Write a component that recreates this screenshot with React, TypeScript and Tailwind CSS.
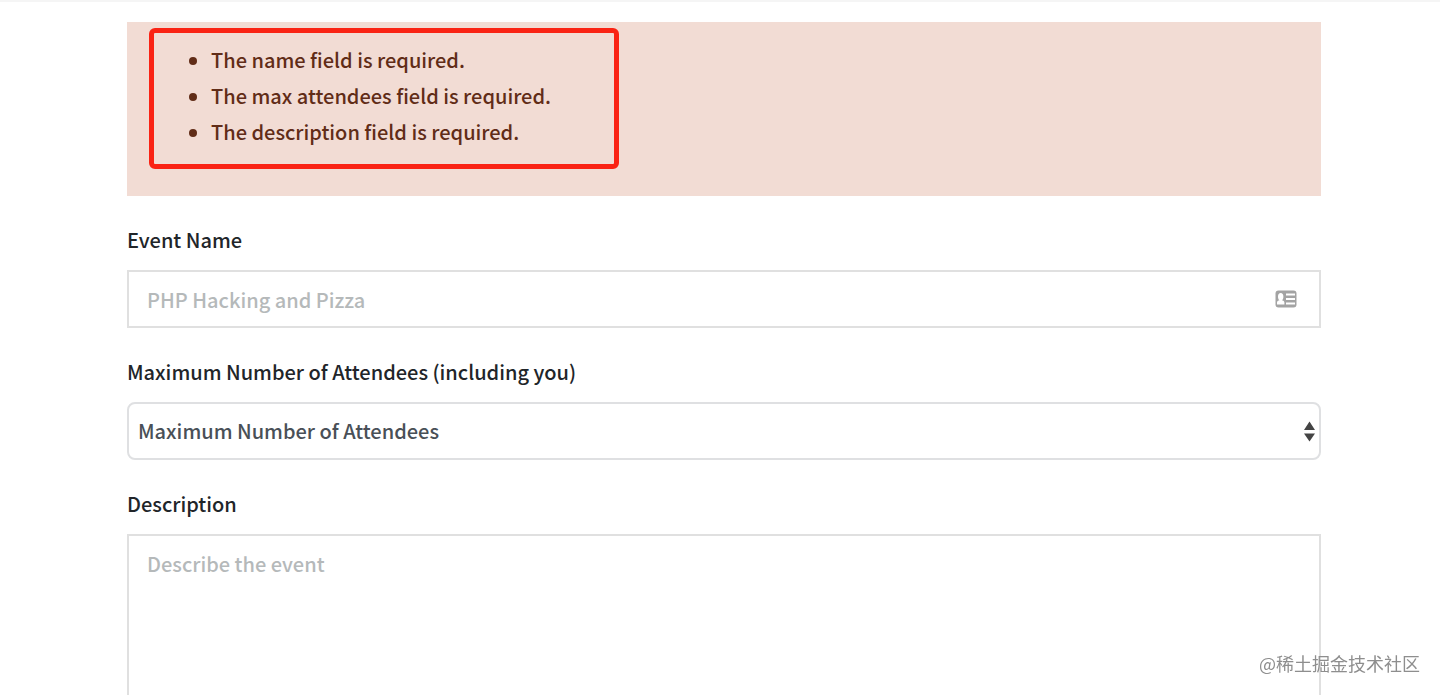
import type { ReactNode } from "react";

const errors = [
  "The name field is required.",
  "The max attendees field is required.",
  "The description field is required.",
];

interface FieldProps {
  id: string;
  label: string;
  children: ReactNode;
}

const Field = ({ id, label, children }: FieldProps) => (
  <div className="flex flex-col gap-3">
    <label htmlFor={id} className="text-[#212529]">
      {label}
    </label>
    {children}
  </div>
);

const ContactCardIcon = () => (
  <svg
    className="pointer-events-none absolute inset-y-0 right-6 my-auto h-[18px] w-[22px]"
    viewBox="0 0 22 18"
    aria-hidden="true"
  >
    <rect x="0.500" y="0.500" width="21" height="17" rx="3" fill="#a3a3a3" />
    <path
      d="M2 14.500v-2c0-1.300 1-1.700 2.500-2.200C3.400 9.500 3 8.400 3 6.500 3 4.300 4 3 5.700 3s2.700 1.300 2.700 3.500c0 1.900-.4 3-1.500 3.800 1.500.5 2.500.9 2.500 2.200v2z"
      fill="#fff"
    />
    <path d="M11 3.500h9v2h-9zM11 8h9v2h-9zM11 12.500h9v2h-9z" fill="#fff" />
  </svg>
);

const SelectArrows = () => (
  <svg
    className="pointer-events-none absolute inset-y-0 right-1.5 my-auto h-[21px] w-[11px]"
    viewBox="0 0 11 21"
    aria-hidden="true"
  >
    <path d="M5.500 0.500l5.500 8.500H0zM5.500 20.500l5.500-8H0z" fill="#444" />
  </svg>
);

const App = () => {
  return (
    <div className="h-screen overflow-hidden border-t-2 border-[#f5f5f5] bg-white font-['Noto_Sans_CJK_SC',sans-serif] text-[20px] leading-9 font-medium">
      <form className="flex flex-col gap-[26px] pt-5 pr-[119px] pl-[127px]">
        <div className="relative bg-[#f2dcd4] pt-5 pb-[46px] text-[#612c17]" role="alert">
          <ul className="list-disc pl-[84px]">
            {errors.map((error) => (
              <li key={error}>{error}</li>
            ))}
          </ul>
          <div className="absolute top-1.5 left-[22px] h-[141px] w-[470px] rounded-md border-5 border-[#fa2314]" />
        </div>

        <Field id="name" label="Event Name">
          <div className="relative">
            <input
              id="name"
              type="text"
              placeholder="PHP Hacking and Pizza"
              className="block h-[58px] w-full border-2 border-[#e0e0e0] px-[18px] placeholder:text-[#b5b9ba]"
            />
            <ContactCardIcon />
          </div>
        </Field>

        <Field id="max_attendees" label="Maximum Number of Attendees (including you)">
          <div className="relative">
            <select
              id="max_attendees"
              defaultValue=""
              className="block h-[58px] w-full appearance-none rounded-lg border-2 border-[#dfe0e2] bg-white px-[9px] text-[#495057]"
            >
              <option value="">Maximum Number of Attendees</option>
            </select>
            <SelectArrows />
          </div>
        </Field>

        <Field id="description" label="Description">
          <textarea
            id="description"
            rows={10}
            placeholder="Describe the event"
            className="block w-full resize-none border-2 border-[#e0e0e0] px-[18px] py-2.5 placeholder:text-[#b5b9ba]"
          />
        </Field>
      </form>

      <div className="fixed right-5 bottom-3.5 text-lg leading-9 font-normal text-[#8e8e8e]">
        @稀土掘金技术社区
      </div>
    </div>
  );
};

export default App;
